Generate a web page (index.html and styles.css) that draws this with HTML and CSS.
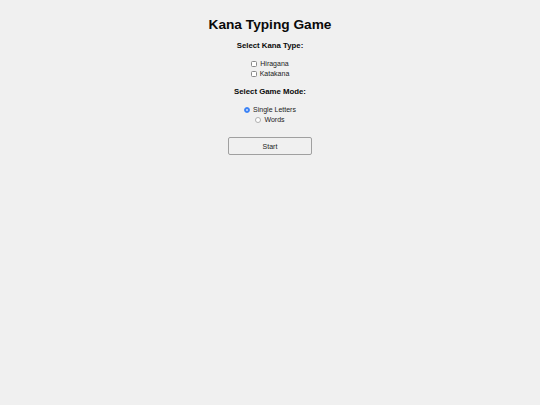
FILE: index.html
```html
<!DOCTYPE html>
<html>
<head>
<meta charset="utf-8">
<link rel="stylesheet" href="styles.css">
</head>
<body>
<div class="app">
  <h1 class="title">Kana Typing Game</h1>
  <h2 class="section-title">Select Kana Type:</h2>
  <div class="options">
    <label class="option"><input type="checkbox" class="check"> Hiragana</label>
    <label class="option"><input type="checkbox" class="check"> Katakana</label>
  </div>
  <h2 class="section-title">Select Game Mode:</h2>
  <div class="options">
    <label class="option"><input type="radio" name="mode" class="radio" checked> Single Letters</label>
    <label class="option"><input type="radio" name="mode" class="radio"> Words</label>
  </div>
  <button class="start">Start</button>
</div>
</body>
</html>
```
FILE: styles.css
```css
html, body {
  margin: 0;
  padding: 0;
  background: #f0f0f0;
}
body {
  font-family: "Liberation Sans", Arial, sans-serif;
  color: #000;
}
.app {
  display: flex;
  flex-direction: column;
  align-items: center;
  padding-top: 16px;
}
.title {
  font-size: 13.7px;
  font-weight: bold;
  margin: 0;
  line-height: 18px;
  color: #0a0a0a;
}
.section-title {
  font-size: 7.8px;
  font-weight: bold;
  margin: 7px 0 0 0;
  line-height: 10px;
  color: #0a0a0a;
}
.options {
  display: flex;
  flex-direction: column;
  align-items: center;
  margin-top: 8px;
}
.option {
  font-size: 7px;
  line-height: 10.3px;
  display: flex;
  align-items: center;
  color: #222;
}
.check, .radio {
  appearance: none;
  -webkit-appearance: none;
  width: 6px;
  height: 6px;
  margin: 0 3px 0 0;
  background: #fff;
  border: 0.6px solid #8a8a8a;
  box-sizing: border-box;
}
.check {
  border-radius: 1.5px;
}
.radio {
  border-radius: 50%;
  border-color: #b0b0b0;
}
.radio:checked {
  background: radial-gradient(circle, #e8f0ff 0 22%, #3b82f6 30%);
  border-color: #3b82f6;
}
.start {
  margin-top: 12px;
  width: 84px;
  height: 18px;
  font-family: "Liberation Sans", Arial, sans-serif;
  font-size: 7px;
  color: #222;
  background: #f0f0f0;
  border: 1px solid #a0a0a0;
  border-radius: 2px;
}
```
